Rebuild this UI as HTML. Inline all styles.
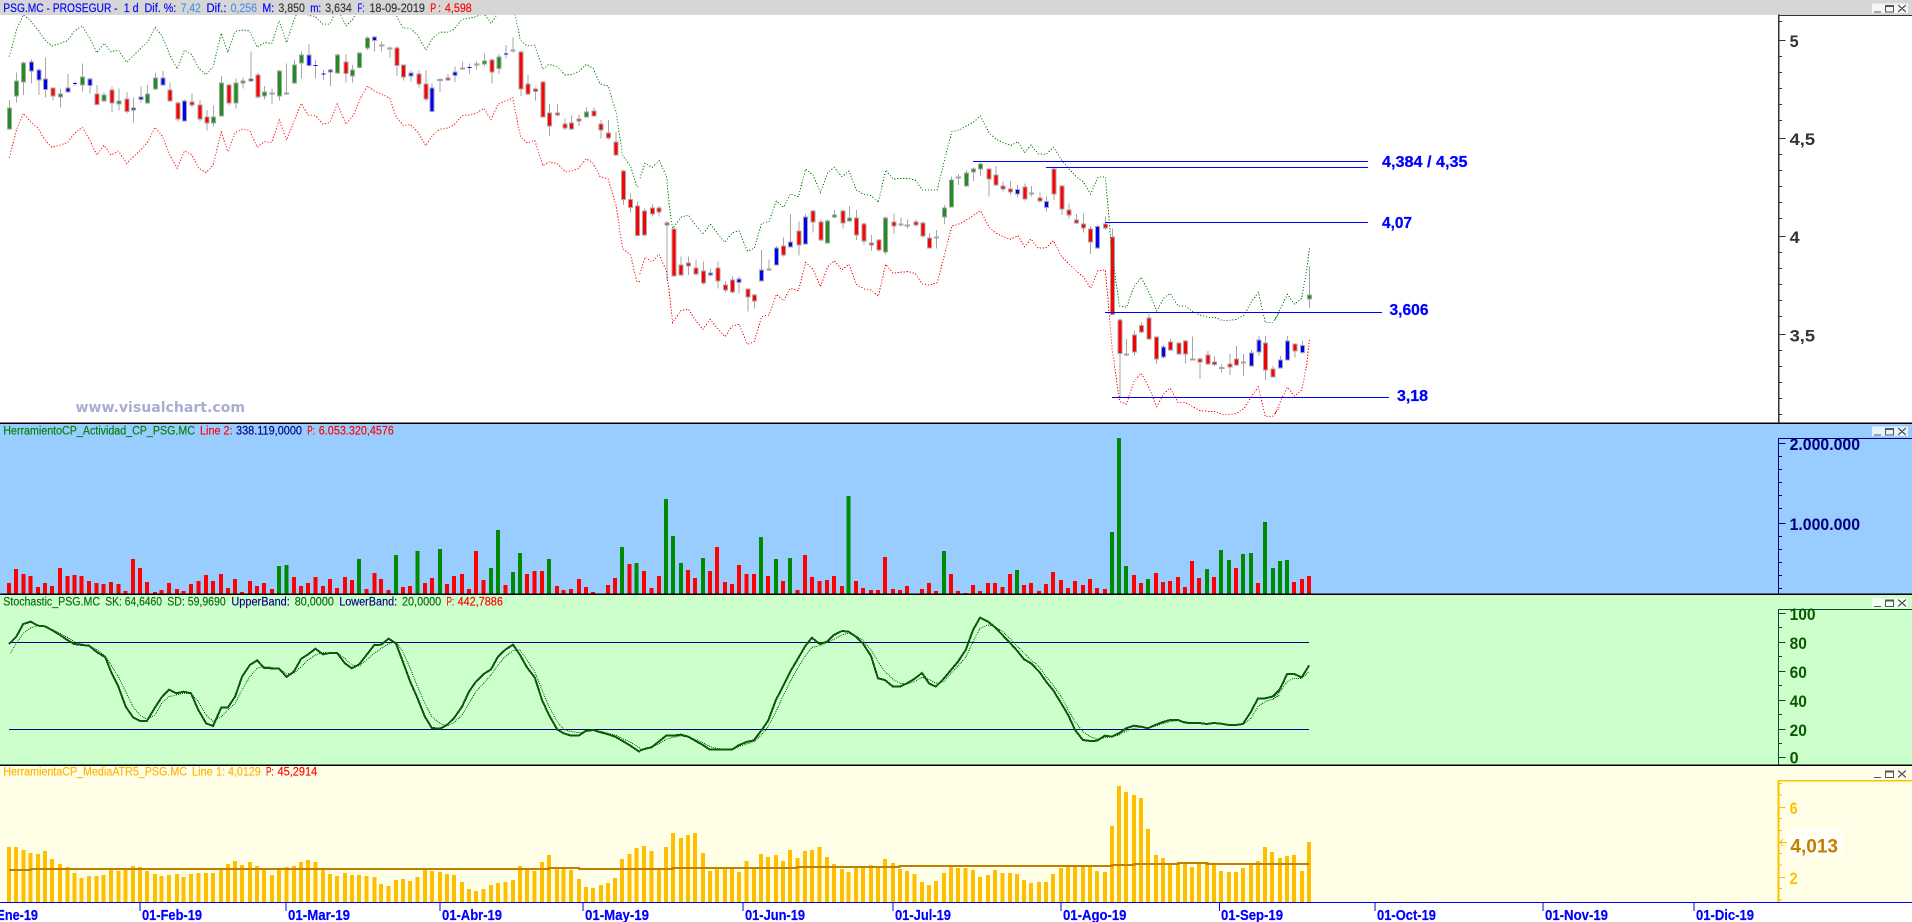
<!DOCTYPE html>
<html lang="es">
<head>
<meta charset="utf-8">
<title>PSG.MC - PROSEGUR</title>
<style>
html,body{margin:0;padding:0;width:1912px;height:922px;overflow:hidden;background:#fff}
svg{display:block}
path{vector-effect:non-scaling-stroke;fill:none;shape-rendering:crispEdges}
text{font-family:"Liberation Sans",sans-serif;white-space:pre}
.t{font-size:11.5px;stroke-width:.15}
.t text{stroke:currentColor}
.b{font-size:16.5px;font-weight:bold}
.dt{font-size:15px;font-weight:bold;fill:#0000ff;stroke:#0000ff;stroke-width:.2}
.an{font-size:15.5px;font-weight:bold;fill:#0000ff;stroke:#0000ff;stroke-width:.25}
.d{stroke-width:1;stroke-dasharray:1.2 1.8}
</style>
</head>
<body>
<svg xmlns="http://www.w3.org/2000/svg" width="1912" height="922" viewBox="0 0 1912 922">
<defs>
<filter id="bd" filterUnits="userSpaceOnUse" x="0" y="0" width="1912" height="430" color-interpolation-filters="sRGB">
<feMorphology in="SourceAlpha" operator="dilate" radius="1 0" result="a"/>
<feFlood flood-color="#a6a6a6"/>
<feComposite in2="a" operator="in" result="g"/>
<feMorphology in="SourceGraphic" operator="erode" radius="0 1" result="c"/>
<feMerge><feMergeNode in="g"/><feMergeNode in="c"/></feMerge>
</filter>
</defs>

<!-- pane backgrounds -->
<rect x="0" y="0" width="1912" height="922" fill="#fff"/>
<rect x="0" y="424" width="1912" height="170" fill="#99ccff"/>
<rect x="0" y="595" width="1912" height="170" fill="#ccffcc"/>
<rect x="0" y="766" width="1912" height="136" fill="#ffffe8"/>

<!-- candles: wicks -->
<g stroke="#a6a6a6" stroke-width="1">
<path transform="scale(.40816,.33333)" d="M23 300V390M40 217V308M57 185V285M77 178V250M95 205V285M112 172V293M130 262V302M148 265V322M166 222V278M184 245V258M202 190V275M220 232V280M238 255V316M255 278V305M274 260V338M291 265V332M311 276V340M327 292V368M345 260V308M361 255V312M381 218V270M399 213V258M416 247V305M436 305V365M452 298V365M470 280V322M490 300V365M507 330V392M523 316V380M543 228V350M561 252V316M578 235V325M595 232V265M615 155V245M632 217V295M648 258V298M667 265V312M685 210V302M702 190V285M721 180V252M739 155V236M757 132V200M773 180V236M793 210V240M810 205V258M827 160V222M848 162V248M864 195V248M881 157V205M900 110V150M918 108V155M935 125V155M955 140V172M973 138V228M989 193V242M1007 212V245M1026 212V262M1044 210V305M1059 250V338M1078 234V276M1097 222V243M1115 200V246M1133 185V210M1150 190V222M1168 185V210M1187 160V200M1205 175V250M1222 162V222M1240 135V176M1257 113V158M1276 153V288M1294 225V285M1312 262V302M1330 243V352M1346 312V408M1366 312V350M1384 355V390M1400 347V390M1419 343V378M1437 322V353M1455 322V350M1472 360V415M1491 360V418M1509 396V468M1527 510V615M1545 580V638M1562 605V708"/>
<path transform="translate(640,0) scale(.40816,.33333)" d="M11 625V708M31 612V650M47 618V650M66 663V840M83 682V830M101 770V828M119 770V825M137 780V825M156 785V853M173 805V830M191 785V866M210 843V878M227 828V880M243 830V880M264 865V935M281 882V925M298 750V845M316 778V813M334 738V797M352 712V770M369 642V743M389 665V767M406 642V735M424 630V698M443 658V723M459 658V730M477 630V655M497 630V685M513 618V665M531 630V720M549 668V733M567 705V753M585 717V755M602 650V764M622 640V700M639 652V680M655 658V685M676 658V680M693 665V712M709 700V745M726 690V745M746 615V672M763 530V622M780 522V555M800 510V560M817 502V543M834 488V528M855 505V590M872 498V558M889 545V575M908 543V585M925 555V592M943 550V602M959 558V590M980 577V607M996 590V635M1014 503V600M1034 555V645M1051 610V655M1069 642V672M1087 640V698M1104 678V762M1121 675V747M1140 650V690M1158 685V945M1176 955V1195M1192 1017V1068M1212 993V1067M1229 968V1000M1247 942V1020M1266 1009V1092M1282 1035V1075M1300 1017V1052M1320 1027V1065M1337 1020V1090M1354 1010V1080M1372 1072V1137M1391 1053V1095M1408 1068V1098M1425 1093V1118M1445 1062V1125M1462 1038V1098M1478 1062V1128M1498 1050V1100M1516 1008V1068M1533 1008V1140M1551 1098V1133"/>
<path transform="translate(1272,0) scale(.40816,.33333)" d="M21 1068V1105M38 1008V1082M56 1030V1072M75 1022V1062M92 798V924"/>
</g>
<!-- doji crosses -->
<g stroke="#a6a6a6" stroke-width="2">
<path transform="scale(.40816,.33333)" d="M660 280H674M928 137H942M948 146H962M1071 240H1085M1161 194H1175"/>
<path transform="translate(640,0) scale(.40816,.33333)" d="M648 676H662M773 532H787M1347 1078H1361M1418 1104H1432"/>
</g>
<g stroke="#0000ff" stroke-width="1">
<path transform="scale(.40816,.33333)" d="M179 250H189M768 196H778M788 222H798M1145 203H1155M1235 162H1245"/>
</g>

<!-- candles: bodies -->
<g filter="url(#bd)" stroke-width="3">
<g transform="scale(.40816,.33333)">
<path stroke="#ff0000" d="M130 263V289M238 281V315M274 268V310M311 296V336M416 268V304M436 308V358M470 305V316M490 314V358M507 350V370M561 254V310M632 224V292M848 185V222M973 143V198M989 194V232M1026 221V253M1044 251V299M1097 233V241M1205 179V217M1276 155V268M1294 251V283M1312 266V276M1330 245V352M1346 338V380M1366 338V347M1384 371V385M1400 368V388M1419 356V364M1455 332V349M1472 371V391M1491 398V415M1509 425V466M1527 512V600M1545 597V624M1562 617V708"/>
<path stroke="#1f8f1f" d="M23 322V388M40 242V290M57 187V247M148 280V292M202 230V256M255 284V304M291 302V314M361 281V310M381 233V268M523 350V370M543 248V349M578 248V310M595 241V250M648 274V290M685 211V290M721 194V250M739 163V190M827 164V220M864 209V229M881 158V204M900 113V146M1133 202V208M1187 181V193M1222 170V207M1257 149V155M1437 334V352"/>
<path stroke="#0000ff" d="M77 184V214M95 208V241M112 236V270M166 263V277M220 236V258M327 323V331M345 290V300M399 233V256M452 302V364M615 236V244M702 277V283M757 164V198M810 209V217M918 110V123M1007 218V229M1059 263V336M1115 215V228"/>
</g>
<g transform="translate(640,0) scale(.40816,.33333)">
<path stroke="#ff0000" d="M11 631V706M31 623V643M47 623V637M66 667V676M83 685V829M101 794V826M119 788V799M137 802V823M156 811V850M191 802V844M210 854V871M227 839V877M264 866V892M281 884V904M352 737V767M389 692V737M424 632V667M443 665V721M497 632V670M531 653V706M549 670V724M567 727V737M585 719V751M622 665V679M676 665V677M693 667V710M709 713V745M855 506V538M872 524V556M889 557V568M908 566V577M943 560V598M980 593V604M1014 505V583M1034 557V628M1051 629V646M1069 658V670M1087 671V685M1104 686V728M1140 670V685M1158 710V945M1176 958V1062M1192 1060V1067M1212 1003V1057M1229 975V997M1247 952V1018M1266 1010V1078M1300 1024V1052M1320 1027V1063M1337 1022V1063M1372 1076V1087M1391 1064V1093M1408 1084V1095M1445 1090V1102M1462 1076V1096M1533 1027V1111M1551 1105V1132"/>
<path stroke="#1f8f1f" d="M459 661V730M477 644V653M513 653V664M602 653V757M746 623V652M763 539V622M800 518V559M817 506V517M834 491V508"/>
<path stroke="#0000ff" d="M173 818V826M243 836V849M298 809V844M316 805V811M334 742V796M369 725V742M406 650V733M639 671V676M726 710V715M925 567V583M959 578V583M996 603V624M1121 678V745M1282 1040V1072M1478 1084V1090M1498 1058V1099M1516 1018V1058"/>
</g>
<g transform="translate(1272,0) scale(.40816,.33333)">
<path stroke="#ff0000" d="M56 1031V1054"/>
<path stroke="#1f8f1f" d="M92 884V898"/>
<path stroke="#0000ff" d="M21 1079V1105M38 1021V1081M75 1035V1059"/>
</g>
</g>

<!-- bands -->
<g class="d" stroke="#008000">
<path transform="scale(.40816,.33333)" d="M23 170L40 90L57 44L75 62L93 90L110 120L127 138L147 130L165 122L182 93L202 78L220 115L237 158L255 130L272 155L290 150L310 187L328 165L345 145L362 125L380 82L398 110L416 165L434 207L452 150L470 165L487 205L505 224L522 200L542 100L558 157L576 95L593 90L612 93L630 142L647 128L666 130L684 63L702 128L720 60L735 20L755 45L773 50L791 73L808 72L826 25L848 78L866 55L884 10L900 -20L920 -30L940 -20L952 -10L970 45L988 85L1005 85L1023 105L1043 150L1060 115L1078 97L1095 97L1112 88L1132 58L1149 55L1166 50L1185 40L1203 70L1220 40L1238 -5L1257 -5L1262 45L1275 120L1291 138L1310 135L1330 208L1345 193L1365 200L1385 225L1400 224L1418 215L1436 193L1453 205L1470 252L1490 258L1510 340L1525 465L1545 500L1560 560L1568 560"/>
<path transform="translate(640,0) scale(.40816,.33333)" d="M0 535L12 490L30 502L47 482L65 530L72 620L80 685L100 652L118 645L136 675L154 703L172 672L190 700L208 727L226 698L243 693L263 753L280 745L298 670L316 665L334 603L352 622L368 582L388 590L406 507L424 525L442 577L460 518L476 502L494 530L512 513L530 570L548 583L566 587L584 607L602 510L620 537L638 535L656 535L674 540L692 570L710 570L728 570L746 480L764 395L782 390L800 378L818 365L834 348L856 400L873 418L890 428L908 437L926 425L942 458L958 435L976 462L995 463L1013 442L1033 480L1050 505L1068 530L1086 545L1104 582L1122 532L1140 530L1148 640L1156 760L1175 918L1192 922L1210 860L1228 832L1248 880L1266 933L1284 893L1299 880L1318 918L1336 918L1354 935L1372 945L1390 952L1408 952L1426 961L1444 961L1462 958L1480 945L1498 905L1515 877L1532 968L1550 968L1568 935"/>
<path transform="translate(1272,0) scale(.40816,.33333)" d="M8 958L25 915L38 883L55 913L73 895L85 810L92 742"/>
</g>
<g class="d" stroke="#ff0000">
<path transform="scale(.40816,.33333)" d="M23 473L40 390L57 340L75 365L93 385L110 420L127 442L147 435L165 428L182 400L202 382L220 420L237 465L255 436L272 465L290 453L310 490L328 468L345 450L362 425L380 382L398 410L416 465L434 505L452 452L470 465L487 505L505 518L522 495L542 397L558 455L576 398L593 388L612 392L630 442L647 425L666 427L684 360L702 420L720 365L738 310L755 345L773 347L791 372L808 368L826 312L848 373L866 345L884 292L900 258L920 275L940 285L955 295L970 350L988 377L1005 373L1023 395L1043 437L1060 405L1078 387L1095 385L1112 375L1132 347L1149 345L1166 340L1185 325L1203 358L1220 313L1238 303L1257 293L1262 330L1275 410L1291 428L1310 422L1330 497L1345 486L1365 490L1385 515L1400 513L1418 505L1436 476L1453 490L1470 530L1490 537L1510 620L1525 745L1545 765L1560 845L1568 845"/>
<path transform="translate(640,0) scale(.40816,.33333)" d="M0 822L12 772L30 785L47 763L65 815L72 880L80 968L100 932L118 927L136 960L154 988L172 958L190 985L208 1010L226 978L243 973L263 1033L280 1025L298 950L316 945L334 883L352 902L368 865L388 872L406 787L424 808L442 860L460 800L476 782L494 810L512 793L530 853L548 866L566 870L584 889L602 793L620 820L638 817L656 815L674 820L692 852L710 855L728 848L746 765L764 678L782 672L800 660L818 645L834 632L856 683L873 700L890 710L908 718L926 707L942 740L958 717L976 745L995 743L1013 722L1033 770L1050 790L1068 812L1086 830L1104 865L1122 812L1140 810L1148 920L1156 1040L1175 1205L1192 1212L1210 1145L1228 1120L1248 1165L1266 1220L1284 1180L1299 1165L1318 1207L1336 1207L1354 1220L1372 1232L1390 1234L1408 1234L1426 1243L1444 1243L1462 1240L1480 1225L1498 1190L1515 1160L1532 1250L1550 1250L1568 1220"/>
<path transform="translate(1272,0) scale(.40816,.33333)" d="M8 1240L25 1192L38 1162L55 1188L73 1170L85 1095L92 1020"/>
</g>

<!-- annotation lines -->
<g fill="#0000ff">
<rect x="973" y="161" width="395" height="1"/>
<rect x="1046" y="167" width="322" height="1"/>
<rect x="1105" y="222" width="263" height="1"/>
<rect x="1105" y="312" width="277" height="1"/>
<rect x="1112" y="397" width="277" height="1"/>
</g>
<text class="an" x="1382" y="167" textLength="85.5" lengthAdjust="spacingAndGlyphs">4,384 / 4,35</text>
<text class="an" x="1382" y="228" textLength="30" lengthAdjust="spacingAndGlyphs">4,07</text>
<text class="an" x="1389.5" y="315" textLength="39" lengthAdjust="spacingAndGlyphs">3,606</text>
<text class="an" x="1397" y="401" textLength="31" lengthAdjust="spacingAndGlyphs">3,18</text>

<text x="75.5" y="412" font-size="14" font-weight="bold" style="font-family:'DejaVu Sans',sans-serif" fill="#a9aed0" textLength="169.5" lengthAdjust="spacingAndGlyphs">www.visualchart.com</text>

<!-- title bar -->
<rect x="0" y="0" width="1912" height="15" fill="#d6d6d6"/>
<g class="t">
<text x="3.3" y="12" fill="#0000ff" color="#0000ff" textLength="114.3" lengthAdjust="spacingAndGlyphs">PSG.MC - PROSEGUR -</text>
<text x="123.7" y="12" fill="#0000ff" color="#0000ff" textLength="15" lengthAdjust="spacingAndGlyphs">1 d</text>
<text x="144.5" y="12" fill="#0000ff" color="#0000ff" textLength="31.8" lengthAdjust="spacingAndGlyphs">Dif. %:</text>
<text x="180.8" y="12" fill="#4a90e2" color="#4a90e2" textLength="20" lengthAdjust="spacingAndGlyphs">7,42</text>
<text x="206.5" y="12" fill="#0000ff" color="#0000ff" textLength="20" lengthAdjust="spacingAndGlyphs">Dif.:</text>
<text x="230.6" y="12" fill="#4a90e2" color="#4a90e2" textLength="26.4" lengthAdjust="spacingAndGlyphs">0,256</text>
<text x="262.4" y="12" fill="#0000ff" color="#0000ff" textLength="11.9" lengthAdjust="spacingAndGlyphs">M:</text>
<text x="278.4" y="12" fill="#333" color="#333" textLength="26.5" lengthAdjust="spacingAndGlyphs">3,850</text>
<text x="310.2" y="12" fill="#0000ff" color="#0000ff" textLength="11" lengthAdjust="spacingAndGlyphs">m:</text>
<text x="325.3" y="12" fill="#333" color="#333" textLength="26.5" lengthAdjust="spacingAndGlyphs">3,634</text>
<text x="357.6" y="12" fill="#0000ff" color="#0000ff" textLength="6.9" lengthAdjust="spacingAndGlyphs">F:</text>
<text x="369.4" y="12" fill="#333" color="#333" textLength="55.5" lengthAdjust="spacingAndGlyphs">18-09-2019</text>
<text x="430.2" y="12" fill="#ff0000" color="#ff0000" textLength="10.6" lengthAdjust="spacingAndGlyphs">P :</text>
<text x="444.9" y="12" fill="#ff0000" color="#ff0000" textLength="26.9" lengthAdjust="spacingAndGlyphs">4,598</text>
</g>

<!-- main axis -->
<rect x="1778" y="15" width="134" height="1" fill="#333"/>
<g transform="translate(1272,0) scale(.40816,.33333)" stroke="#333" stroke-width="1">
<path stroke-width="1.5" d="M1241 44V1270"/>
<path d="M1241 65H1249M1241 121H1258M1241 169H1249M1241 217H1249M1241 265H1249M1241 313H1249M1241 361H1249M1241 415H1258M1241 463H1249M1241 511H1249M1241 559H1249M1241 607H1249M1241 655H1249M1241 709H1258M1241 757H1249M1241 805H1249M1241 853H1249M1241 901H1249M1241 949H1249M1241 1003H1258M1241 1051H1249M1241 1099H1249M1241 1147H1249M1241 1195H1249M1241 1243H1249"/>
</g>
<g class="b" fill="#333">
<text x="1789.6" y="47" textLength="9" lengthAdjust="spacingAndGlyphs">5</text>
<text x="1789.6" y="145" textLength="25.5" lengthAdjust="spacingAndGlyphs">4,5</text>
<text x="1789.6" y="243" textLength="10" lengthAdjust="spacingAndGlyphs">4</text>
<text x="1789.6" y="341.5" textLength="25.5" lengthAdjust="spacingAndGlyphs">3,5</text>
</g>

<!-- volume pane -->
<g stroke-width="4">
<g transform="translate(0,420) scale(.40816,.33333)">
<path stroke="#ff0000" d="M22 522V489M39 522V447M57 522V462M75 522V468M93 522V501M110 522V489M127 522V498M147 522V444M165 522V468M182 522V465M200 522V468M218 522V483M236 522V489M254 522V492M272 522V486M290 522V492M308 522V513M326 522V417M343 522V444M360 522V486M380 522V516M396 522V510M414 522V489M434 522V507M450 522V513M468 522V492M486 522V483M505 522V465M522 522V483M542 522V462M558 522V504M576 522V477M593 522V516M612 522V483M630 522V498M647 522V489M666 522V507M720 522V471M738 522V498M755 522V489M773 522V471M791 522V498M808 522V477M826 522V504M845 522V471M862 522V480M898 522V507M917 522V459M934 522V477M952 522V510M987 522V501M1005 522V498M1041 522V489M1058 522V474M1095 522V492M1112 522V468M1132 522V462M1149 522V507M1166 522V393M1185 522V480M1238 522V495M1291 522V462M1310 522V453M1328 522V453M1365 522V498M1381 522V510M1399 522V507M1418 522V477M1436 522V501M1453 522V516M1490 522V495M1507 522V474M1542 522V432"/>
<path stroke="#008a00" d="M684 522V438M702 522V435M880 522V417M970 522V405M1023 522V393M1078 522V387M1203 522V444M1220 522V330M1257 522V456M1274 522V399M1345 522V417M1524 522V381M1560 522V429"/>
</g>
<g transform="translate(640,420) scale(.40816,.33333)">
<path stroke="#ff0000" d="M10 522V453M28 522V504M46 522V468M118 522V450M135 522V474M171 522V453M189 522V381M208 522V486M225 522V492M243 522V435M261 522V462M279 522V462M314 522V468M350 522V483M386 522V510M404 522V405M421 522V471M440 522V483M458 522V480M475 522V468M495 522V498M529 522V483M546 522V504M566 522V510M583 522V510M600 522V411M620 522V507M637 522V510M654 522V498M691 522V507M708 522V489M725 522V513M762 522V462M779 522V513M798 522V519M816 522V495M833 522V513M853 522V489M870 522V489M888 522V501M906 522V462M941 522V495M958 522V489M978 522V513M995 522V492M1012 522V456M1032 522V480M1049 522V504M1066 522V483M1085 522V495M1103 522V477M1120 522V504M1139 522V507M1210 522V465M1228 522V489M1264 522V459M1281 522V486M1298 522V483M1318 522V471M1335 522V501M1352 522V423M1370 522V474M1406 522V471M1460 522V444M1514 522V489"/>
<path stroke="#008a00" d="M64 522V237M81 522V348M100 522V429M154 522V414M297 522V351M333 522V417M368 522V414M511 522V228M745 522V393M924 522V450M1156 522V336M1173 522V54M1191 522V438M1244 522V477M1389 522V447M1423 522V390M1443 522V420M1477 522V402M1497 522V399M1531 522V306"/>
</g>
<g transform="translate(1272,420) scale(.40816,.33333)">
<path stroke="#ff0000" d="M54 522V486M73 522V477M91 522V468"/>
<path stroke="#008a00" d="M3 522V444M20 522V423M37 522V420"/>
</g>
</g>
<rect x="1778" y="438" width="134" height="1" fill="#000080"/>
<g transform="translate(1272,420) scale(.40816,.33333)" stroke="#000080" stroke-width="1">
<path d="M1241 55V522"/>
<path d="M1241 70H1258M1241 109H1249M1241 148H1249M1241 187H1249M1241 226H1249M1241 265H1249M1241 310H1258M1241 349H1249M1241 388H1249M1241 427H1249M1241 466H1249M1241 505H1249"/>
</g>
<g class="b" fill="#000080">
<text x="1789.6" y="450" textLength="70.4" lengthAdjust="spacingAndGlyphs">2.000.000</text>
<text x="1789.6" y="530" textLength="70.4" lengthAdjust="spacingAndGlyphs">1.000.000</text>
</g>
<g class="t">
<text x="3.3" y="434.7" fill="#008000" color="#008000" textLength="191.7" lengthAdjust="spacingAndGlyphs">HerramientoCP_Actividad_CP_PSG.MC</text>
<text x="200" y="434.7" fill="#ff0000" color="#ff0000" textLength="32.6" lengthAdjust="spacingAndGlyphs">Line 2:</text>
<text x="236" y="434.7" fill="#000080" color="#000080" textLength="66" lengthAdjust="spacingAndGlyphs">338.119,0000</text>
<text x="307.3" y="434.7" fill="#ff0000" color="#ff0000" textLength="7.7" lengthAdjust="spacingAndGlyphs">P:</text>
<text x="318.8" y="434.7" fill="#ff0000" color="#ff0000" textLength="75.1" lengthAdjust="spacingAndGlyphs">6.053.320,4576</text>
</g>

<!-- stochastic pane -->
<g fill="#000080">
<rect x="9" y="642" width="1300" height="1"/>
<rect x="9" y="729" width="1300" height="1"/>
</g>
<g stroke="#0a5a0a" class="d" style="stroke-dasharray:1 1">
<path transform="translate(0,420) scale(.40816,.33333)" d="M26 700L40 670L57 640L75 624L93 617L110 620L127 628L147 640L165 652L182 665L200 672L218 678L236 688L258 708L272 735L290 770L308 815L326 860L343 885L360 898L380 885L396 850L414 830L432 825L450 820L468 820L486 845L505 885L522 905L542 890L558 870L576 850L593 810L612 770L630 745L647 740L666 742L684 748L702 760L720 760L738 740L755 720L773 705L791 697L808 700L826 698L845 715L862 735L880 738L898 720L917 700L934 685L952 672L970 665L987 695L1005 745L1023 800L1041 850L1058 890L1078 910L1095 918L1112 908L1132 885L1149 850L1166 815L1185 790L1203 765L1220 735L1238 710L1257 692L1274 690L1291 720L1310 755L1328 810L1345 860L1365 905L1381 928L1399 935L1418 938L1436 935L1453 932L1472 935L1490 940L1507 945L1524 955L1542 965L1560 978L1568 985"/>
<path transform="translate(640,420) scale(.40816,.33333)" d="M0 988L10 986L28 982L46 972L64 958L81 952L100 948L118 950L135 958L154 968L171 980L189 985L208 989L225 989L243 980L261 972L279 965L297 945L314 920L333 875L350 830L368 785L386 745L404 710L421 682L440 678L458 668L475 658L495 645L511 640L529 648L546 660L566 690L583 725L600 755L620 778L637 790L654 792L672 785L691 772L708 778L725 790L745 785L762 760L779 738L798 712L816 665L833 625L853 615L870 620L888 635L906 655L924 678L941 700L958 720L978 740L995 770L1012 795L1032 830L1049 870L1066 905L1085 935L1103 950L1120 958L1139 953L1156 950L1173 945L1191 933L1210 925L1228 922L1244 923L1264 918L1281 911L1298 905L1318 902L1335 905L1352 908L1370 909L1389 911L1406 910L1423 911L1443 913L1460 915L1477 914L1497 895L1514 860L1531 845L1549 838L1568 825"/>
<path transform="translate(1272,420) scale(.40816,.33333)" d="M3 838L20 815L37 785L54 775L73 775L91 755"/>
</g>
<g stroke="#0a5a0a" stroke-width="2">
<path transform="translate(0,420) scale(.40816,.33333)" d="M22 672L40 650L57 612L75 605L93 617L110 619L127 630L147 645L165 660L182 672L200 675L218 677L236 695L258 712L272 755L290 800L308 860L326 892L343 903L360 903L380 862L396 832L414 809L432 820L450 815L468 820L486 870L505 910L522 918L542 863L558 863L576 830L593 770L612 735L630 721L647 744L666 745L684 746L702 771L720 755L738 716L755 703L773 686L791 703L808 699L826 699L845 730L862 745L880 733L898 705L917 675L934 674L952 656L970 670L987 725L1005 785L1023 835L1041 890L1058 924L1078 926L1095 915L1112 895L1132 860L1149 815L1166 785L1185 762L1203 748L1220 710L1238 689L1257 674L1274 705L1291 742L1310 772L1328 840L1345 885L1365 928L1381 940L1399 947L1418 947L1436 932L1453 930L1472 937L1490 943L1507 950L1524 962L1542 975L1560 990L1568 996"/>
<path transform="translate(640,420) scale(.40816,.33333)" d="M0 992L10 987L28 982L46 965L64 947L81 947L100 944L118 950L135 962L154 975L171 989L189 989L208 989L225 989L243 975L261 966L279 961L297 932L314 902L333 840L350 800L368 755L386 718L404 680L421 653L440 672L458 665L475 645L495 633L511 635L529 650L546 670L566 708L583 775L600 780L620 800L637 800L654 790L672 777L691 759L708 790L725 800L745 775L762 750L779 725L798 690L816 630L833 593L853 605L870 622L888 645L906 668L924 692L941 718L958 730L978 755L995 785L1012 810L1032 850L1049 885L1066 930L1085 960L1103 963L1120 962L1139 947L1156 950L1173 940L1191 925L1210 917L1228 920L1244 925L1264 914L1281 906L1298 900L1318 900L1335 908L1352 909L1370 909L1389 912L1406 909L1423 911L1443 915L1460 915L1477 912L1497 875L1514 835L1531 835L1549 830L1568 810"/>
<path transform="translate(1272,420) scale(.40816,.33333)" d="M3 830L20 806L37 762L54 762L73 772L91 736"/>
</g>
<rect x="1778" y="609" width="134" height="1" fill="#0a4a2a"/>
<g transform="translate(1272,420) scale(.40816,.33333)" stroke="#0a4a2a" stroke-width="1">
<path d="M1241 568V1035"/>
<path d="M1241 581H1258M1241 622H1249M1241 667H1258M1241 709H1249M1241 755H1258M1241 796H1249M1241 841H1258M1241 883H1249M1241 928H1258M1241 970H1249M1241 1012H1258"/>
</g>
<g class="b" fill="#0a5a00">
<text x="1789.6" y="620" textLength="26" lengthAdjust="spacingAndGlyphs">100</text>
<text x="1789.6" y="649" textLength="17.2" lengthAdjust="spacingAndGlyphs">80</text>
<text x="1789.6" y="678" textLength="17.2" lengthAdjust="spacingAndGlyphs">60</text>
<text x="1789.6" y="707" textLength="17.2" lengthAdjust="spacingAndGlyphs">40</text>
<text x="1789.6" y="736" textLength="17.2" lengthAdjust="spacingAndGlyphs">20</text>
<text x="1789.6" y="763.5" textLength="9" lengthAdjust="spacingAndGlyphs">0</text>
</g>
<g class="t">
<text x="3.3" y="605.5" fill="#0a6a0a" color="#0a6a0a" textLength="96.7" lengthAdjust="spacingAndGlyphs">Stochastic_PSG.MC</text>
<text x="105.3" y="605.5" fill="#0a6a0a" color="#0a6a0a" textLength="56.7" lengthAdjust="spacingAndGlyphs">SK: 64,6460</text>
<text x="167.3" y="605.5" fill="#0a6a0a" color="#0a6a0a" textLength="58.4" lengthAdjust="spacingAndGlyphs">SD: 59,9690</text>
<text x="231.4" y="605.5" fill="#000080" color="#000080" textLength="58.4" lengthAdjust="spacingAndGlyphs">UpperBand:</text>
<text x="294.7" y="605.5" fill="#0a6a0a" color="#0a6a0a" textLength="39.2" lengthAdjust="spacingAndGlyphs">80,0000</text>
<text x="339.2" y="605.5" fill="#000080" color="#000080" textLength="58" lengthAdjust="spacingAndGlyphs">LowerBand:</text>
<text x="402" y="605.5" fill="#0a6a0a" color="#0a6a0a" textLength="39.2" lengthAdjust="spacingAndGlyphs">20,0000</text>
<text x="446.5" y="605.5" fill="#ff0000" color="#ff0000" textLength="7.7" lengthAdjust="spacingAndGlyphs">P:</text>
<text x="457.6" y="605.5" fill="#ff0000" color="#ff0000" textLength="45.3" lengthAdjust="spacingAndGlyphs">442,7886</text>
</g>

<!-- ATR pane -->
<g stroke="#ffbf00" stroke-width="4">
<path transform="translate(0,420) scale(.40816,.33333)" d="M22 1446V1281M39 1446V1281M57 1446V1290M75 1446V1299M93 1446V1302M110 1446V1293M127 1446V1317M147 1446V1332M165 1446V1341M182 1446V1359M200 1446V1374M218 1446V1368M236 1446V1368M254 1446V1365M272 1446V1350M290 1446V1353M308 1446V1347M326 1446V1338M343 1446V1341M360 1446V1353M380 1446V1362M396 1446V1368M414 1446V1365M434 1446V1362M450 1446V1371M468 1446V1362M486 1446V1359M505 1446V1359M522 1446V1359M542 1446V1347M558 1446V1332M576 1446V1323M593 1446V1335M612 1446V1326M630 1446V1338M647 1446V1347M666 1446V1365M684 1446V1347M702 1446V1341M720 1446V1338M738 1446V1326M755 1446V1320M773 1446V1326M791 1446V1347M808 1446V1362M826 1446V1368M845 1446V1359M862 1446V1365M880 1446V1365M898 1446V1368M917 1446V1371M934 1446V1392M952 1446V1398M970 1446V1380M987 1446V1377M1005 1446V1383M1023 1446V1371M1041 1446V1347M1058 1446V1353M1078 1446V1356M1095 1446V1362M1112 1446V1365M1132 1446V1386M1149 1446V1407M1166 1446V1413M1185 1446V1407M1203 1446V1395M1220 1446V1389M1238 1446V1386M1257 1446V1380M1274 1446V1338M1291 1446V1347M1310 1446V1353M1328 1446V1326M1345 1446V1305M1365 1446V1347M1381 1446V1347M1399 1446V1350M1418 1446V1377M1436 1446V1401M1453 1446V1404M1472 1446V1395M1490 1446V1389M1507 1446V1374M1524 1446V1317M1542 1446V1302M1560 1446V1284"/>
<path transform="translate(640,420) scale(.40816,.33333)" d="M10 1446V1278M28 1446V1293M46 1446V1347M64 1446V1281M81 1446V1239M100 1446V1254M118 1446V1245M135 1446V1239M154 1446V1299M171 1446V1353M189 1446V1344M208 1446V1347M225 1446V1344M243 1446V1356M261 1446V1323M279 1446V1344M297 1446V1302M314 1446V1311M333 1446V1305M350 1446V1323M368 1446V1290M386 1446V1314M404 1446V1293M421 1446V1290M440 1446V1281M458 1446V1311M475 1446V1332M495 1446V1347M511 1446V1356M529 1446V1344M546 1446V1344M566 1446V1335M583 1446V1341M600 1446V1317M620 1446V1329M637 1446V1347M654 1446V1353M672 1446V1362M691 1446V1386M708 1446V1395M725 1446V1383M745 1446V1359M762 1446V1338M779 1446V1344M798 1446V1344M816 1446V1350M833 1446V1371M853 1446V1365M870 1446V1350M888 1446V1359M906 1446V1359M924 1446V1362M941 1446V1380M958 1446V1389M978 1446V1386M995 1446V1386M1012 1446V1362M1032 1446V1344M1049 1446V1338M1066 1446V1338M1085 1446V1338M1103 1446V1338M1120 1446V1353M1139 1446V1356M1156 1446V1218M1173 1446V1098M1191 1446V1116M1210 1446V1125M1228 1446V1134M1244 1446V1227M1264 1446V1305M1281 1446V1314M1298 1446V1332M1318 1446V1332M1335 1446V1332M1352 1446V1341M1370 1446V1332M1389 1446V1326M1406 1446V1332M1423 1446V1353M1443 1446V1356M1460 1446V1356M1477 1446V1344M1497 1446V1332M1514 1446V1323M1531 1446V1281M1549 1446V1296"/>
<path transform="translate(1272,420) scale(.40816,.33333)" d="M20 1446V1314M37 1446V1308M54 1446V1305M73 1446V1353M91 1446V1266"/>
</g>
<path stroke="#bf8000" stroke-width="2" d="M9 870H30.6V869H549V868H579V869H672.6V868H797.5V867H899.6V866H1111.8V865H1133.9V864H1178V863H1207V864H1309"/>
<rect x="1778" y="780" width="134" height="1.5" fill="#ffc000"/>
<g transform="translate(1272,420) scale(.40816,.33333)" stroke="#ffc000" stroke-width="1">
<path stroke-width="2" d="M1241 1080V1446"/>
<path d="M1241 1090H1249M1241 1125H1249M1241 1162H1258M1241 1196H1249M1241 1231H1249M1241 1266H1249M1241 1300H1249M1241 1335H1249M1241 1372H1258M1241 1405H1249M1241 1440H1249"/>
</g>
<path stroke="#ffc000" stroke-width="1" style="shape-rendering:auto" d="M1780 842.5H1787M1783 839L1780 842.5L1783 846"/>
<rect x="1788.3" y="828" width="54.3" height="29" fill="#fffff8"/>
<text x="1790.4" y="852.3" font-size="19" font-weight="bold" fill="#c08000" textLength="47.6" lengthAdjust="spacingAndGlyphs">4,013</text>
<g class="b" fill="#ffc000">
<text x="1789.6" y="814" textLength="8" lengthAdjust="spacingAndGlyphs">6</text>
<text x="1789.6" y="884" textLength="8" lengthAdjust="spacingAndGlyphs">2</text>
</g>
<g class="t">
<text x="3.3" y="775.5" fill="#ffb400" color="#ffb400" textLength="183.7" lengthAdjust="spacingAndGlyphs">HerramientaCP_MediaATR5_PSG.MC</text>
<text x="192" y="775.5" fill="#ffb400" color="#ffb400" textLength="33" lengthAdjust="spacingAndGlyphs">Line 1:</text>
<text x="228" y="775.5" fill="#ffb400" color="#ffb400" textLength="32.7" lengthAdjust="spacingAndGlyphs">4,0129</text>
<text x="266" y="775.5" fill="#ff0000" color="#ff0000" textLength="7.7" lengthAdjust="spacingAndGlyphs">P:</text>
<text x="277.5" y="775.5" fill="#ff0000" color="#ff0000" textLength="39.7" lengthAdjust="spacingAndGlyphs">45,2914</text>
</g>

<!-- separators -->
<rect x="0" y="422.5" width="1912" height="1.5" fill="#000"/>
<rect x="0" y="593.5" width="1912" height="1.5" fill="#000"/>
<rect x="0" y="764.5" width="1912" height="1.5" fill="#000"/>
<rect x="1778" y="420" width="1" height="3" fill="#333"/>

<!-- bottom axis -->
<rect x="0" y="902" width="1912" height="1" fill="#0000ff"/>
<rect x="0" y="903" width="1912" height="19" fill="#fff"/>
<path stroke="#0000ff" stroke-width="1" d="M140 902V911M286 902V911M440 902V911M583 902V911M743 902V911M893 902V911M1061 902V911M1219.5 902V911M1375 902V911M1543 902V911M1694 902V911"/>
<g class="dt">
<text x="-22" y="920" textLength="60" lengthAdjust="spacingAndGlyphs">01-Ene-19</text>
<text x="142" y="920" textLength="60" lengthAdjust="spacingAndGlyphs">01-Feb-19</text>
<text x="288" y="920" textLength="62" lengthAdjust="spacingAndGlyphs">01-Mar-19</text>
<text x="442" y="920" textLength="60" lengthAdjust="spacingAndGlyphs">01-Abr-19</text>
<text x="585" y="920" textLength="64" lengthAdjust="spacingAndGlyphs">01-May-19</text>
<text x="745" y="920" textLength="60" lengthAdjust="spacingAndGlyphs">01-Jun-19</text>
<text x="895" y="920" textLength="56" lengthAdjust="spacingAndGlyphs">01-Jul-19</text>
<text x="1063" y="920" textLength="63.5" lengthAdjust="spacingAndGlyphs">01-Ago-19</text>
<text x="1221" y="920" textLength="62" lengthAdjust="spacingAndGlyphs">01-Sep-19</text>
<text x="1377" y="920" textLength="59" lengthAdjust="spacingAndGlyphs">01-Oct-19</text>
<text x="1545" y="920" textLength="63" lengthAdjust="spacingAndGlyphs">01-Nov-19</text>
<text x="1696" y="920" textLength="58" lengthAdjust="spacingAndGlyphs">01-Dic-19</text>
</g>

<!-- window buttons -->
<g>
<rect x="1872" y="3.5" width="36" height="9.5" fill="#f6f6f6"/>
<rect x="1872" y="426.5" width="36" height="9.5" fill="#fff" fill-opacity=".75"/>
<rect x="1872" y="598" width="36" height="9.5" fill="#fff" fill-opacity=".75"/>
<rect x="1872" y="769" width="36" height="9.5" fill="#fff" fill-opacity=".4"/>
</g>
<g id="wb" stroke="#555" stroke-width="1.2" style="shape-rendering:auto">
<path d="M1874 12H1881"/>
<path d="M1885.5 5.5H1893.5V12H1885.5ZM1885.5 6.5H1893.5"/>
<path d="M1898 5L1906 12M1906 5L1898 12"/>
<path d="M1874 435H1881"/>
<path d="M1885.5 428.5H1893.5V435H1885.5ZM1885.5 429.5H1893.5"/>
<path d="M1898 428L1906 435M1906 428L1898 435"/>
<path d="M1874 606.5H1881"/>
<path d="M1885.5 600H1893.5V606.5H1885.5ZM1885.5 601H1893.5"/>
<path d="M1898 599.5L1906 606.5M1906 599.5L1898 606.5"/>
<path d="M1874 777.5H1881"/>
<path d="M1885.5 771H1893.5V777.5H1885.5ZM1885.5 772H1893.5"/>
<path d="M1898 770.5L1906 777.5M1906 770.5L1898 777.5"/>
</g>
</svg>
</body>
</html>
